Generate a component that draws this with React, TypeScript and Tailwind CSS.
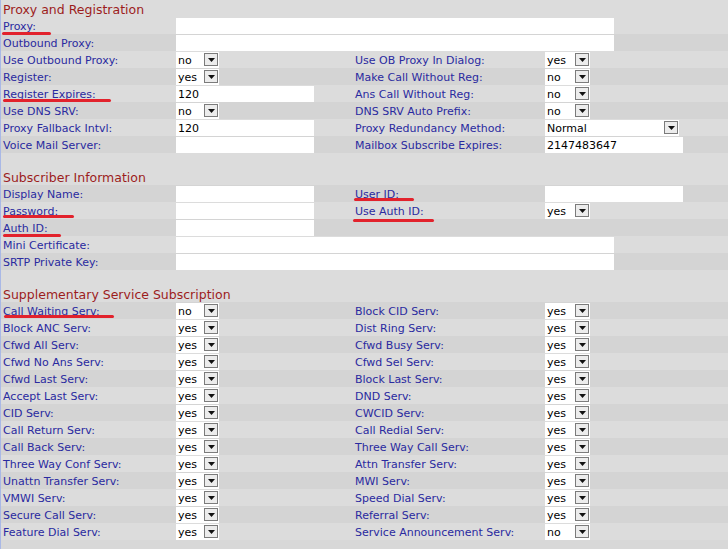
import React from 'react'

type Field =
  | { t: 'text'; v?: string; size: 'short' | 'long' }
  | { t: 'sel'; v: string; size: 'sm' | 'md' | 'lg' }

interface Side {
  label: string
  field: Field
  mark?: string
}

type Row =
  | { kind: 'head'; title: string; gap?: boolean }
  | { kind: 'pair'; l: Side; r?: Side }
  | { kind: 'wide'; l: Side }

const inputSize: Record<string, string> = {
  short: 'w-[138px]',
  long: 'w-[438px]',
}

const selectSize: Record<string, string> = {
  sm: 'w-[43px]',
  md: 'w-[45px]',
  lg: 'w-[134px]',
}

const yes = (size: 'sm' | 'md' = 'sm'): Field => ({ t: 'sel', v: 'yes', size })
const no = (size: 'sm' | 'md' = 'sm'): Field => ({ t: 'sel', v: 'no', size })
const txt = (v = ''): Field => ({ t: 'text', v, size: 'short' })
const long: Field = { t: 'text', v: '', size: 'long' }

const rows: Row[] = [
  { kind: 'head', title: 'Proxy and Registration' },
  { kind: 'wide', l: { label: 'Proxy:', field: long, mark: 'left-[1px] top-[15px] w-[49px]' } },
  { kind: 'wide', l: { label: 'Outbound Proxy:', field: long } },
  {
    kind: 'pair',
    l: { label: 'Use Outbound Proxy:', field: no() },
    r: { label: 'Use OB Proxy In Dialog:', field: yes('md') },
  },
  {
    kind: 'pair',
    l: { label: 'Register:', field: yes() },
    r: { label: 'Make Call Without Reg:', field: no('md') },
  },
  {
    kind: 'pair',
    l: { label: 'Register Expires:', field: txt('120'), mark: 'left-[2px] top-[14px] w-[108px]' },
    r: { label: 'Ans Call Without Reg:', field: no('md') },
  },
  {
    kind: 'pair',
    l: { label: 'Use DNS SRV:', field: no() },
    r: { label: 'DNS SRV Auto Prefix:', field: no('md') },
  },
  {
    kind: 'pair',
    l: { label: 'Proxy Fallback Intvl:', field: txt('120') },
    r: { label: 'Proxy Redundancy Method:', field: { t: 'sel', v: 'Normal', size: 'lg' } },
  },
  {
    kind: 'pair',
    l: { label: 'Voice Mail Server:', field: txt() },
    r: { label: 'Mailbox Subscribe Expires:', field: txt('2147483647') },
  },
  { kind: 'head', title: 'Subscriber Information', gap: true },
  {
    kind: 'pair',
    l: { label: 'Display Name:', field: txt() },
    r: { label: 'User ID:', field: txt(), mark: 'left-[1px] top-[13px] w-[60px]' },
  },
  {
    kind: 'pair',
    l: { label: 'Password:', field: txt(), mark: 'left-[2px] top-[13px] w-[71px]' },
    r: { label: 'Use Auth ID:', field: yes('md'), mark: 'left-[0px] top-[17px] w-[81px]' },
  },
  {
    kind: 'pair',
    l: { label: 'Auth ID:', field: txt(), mark: 'left-[2px] top-[15px] w-[58px]' },
  },
  { kind: 'wide', l: { label: 'Mini Certificate:', field: long } },
  { kind: 'wide', l: { label: 'SRTP Private Key:', field: long } },
  { kind: 'head', title: 'Supplementary Service Subscription', gap: true },
  {
    kind: 'pair',
    l: { label: 'Call Waiting Serv:', field: no(), mark: 'left-[3px] top-[13px] w-[110px]' },
    r: { label: 'Block CID Serv:', field: yes('md') },
  },
  { kind: 'pair', l: { label: 'Block ANC Serv:', field: yes() }, r: { label: 'Dist Ring Serv:', field: yes('md') } },
  { kind: 'pair', l: { label: 'Cfwd All Serv:', field: yes() }, r: { label: 'Cfwd Busy Serv:', field: yes('md') } },
  { kind: 'pair', l: { label: 'Cfwd No Ans Serv:', field: yes() }, r: { label: 'Cfwd Sel Serv:', field: yes('md') } },
  { kind: 'pair', l: { label: 'Cfwd Last Serv:', field: yes() }, r: { label: 'Block Last Serv:', field: yes('md') } },
  { kind: 'pair', l: { label: 'Accept Last Serv:', field: yes() }, r: { label: 'DND Serv:', field: yes('md') } },
  { kind: 'pair', l: { label: 'CID Serv:', field: yes() }, r: { label: 'CWCID Serv:', field: yes('md') } },
  { kind: 'pair', l: { label: 'Call Return Serv:', field: yes() }, r: { label: 'Call Redial Serv:', field: yes('md') } },
  { kind: 'pair', l: { label: 'Call Back Serv:', field: yes() }, r: { label: 'Three Way Call Serv:', field: yes('md') } },
  { kind: 'pair', l: { label: 'Three Way Conf Serv:', field: yes() }, r: { label: 'Attn Transfer Serv:', field: yes('md') } },
  { kind: 'pair', l: { label: 'Unattn Transfer Serv:', field: yes() }, r: { label: 'MWI Serv:', field: yes('md') } },
  { kind: 'pair', l: { label: 'VMWI Serv:', field: yes() }, r: { label: 'Speed Dial Serv:', field: yes('md') } },
  { kind: 'pair', l: { label: 'Secure Call Serv:', field: yes() }, r: { label: 'Referral Serv:', field: yes('md') } },
  { kind: 'pair', l: { label: 'Feature Dial Serv:', field: yes() }, r: { label: 'Service Announcement Serv:', field: no('md') } },
]

const Arrow = () => (
  <span className="flex h-[13px] w-[14px] items-center justify-center border border-[#7b7b7b] bg-[#ececec]">
    <svg width="7" height="4" viewBox="0 0 7 4">
      <path d="M0 0h7L3.5 4z" fill="#111" />
    </svg>
  </span>
)

const Control = ({ field }: { field: Field }) => {
  if (field.t === 'text') {
    return (
      <div className={`flex h-[16px] items-center bg-white pl-[2px] pt-[1px] text-black ${inputSize[field.size]}`}>
        {field.v}
      </div>
    )
  }
  return (
    <div className={`flex h-[16px] items-center justify-between bg-white pl-[2px] pr-[1px] text-black ${selectSize[field.size]}`}>
      <span className="pt-[1px]">{field.v}</span>
      <Arrow />
    </div>
  )
}

const Label = ({ side, className }: { side: Side; className: string }) => (
  <div className={`relative flex items-center pt-[1px] text-[#2a2aa0] ${className}`}>
    {side.label}
    {side.mark && (
      <span className={`absolute z-10 h-[3px] rounded-full bg-[#e2222c] ${side.mark}`} />
    )}
  </div>
)

export default function App() {
  return (
    <div className="h-[549px] w-[728px] overflow-hidden border-l border-[#a9b8e6] bg-[#d8d8d8] font-['DejaVu_Sans',Verdana,sans-serif] text-[11px] leading-none">
      {rows.map((row, i) => {
        const bg = i % 2 === 0 ? 'bg-[#d4d4d4]' : 'bg-[#dcdcdc]'
        if (row.kind === 'head') {
          return (
            <div key={i} className="bg-[#dcdcdc]">
              {row.gap && <div className="h-[15px]" />}
              <div className="flex h-[17px] items-end pb-[1px] pl-[2px] text-[12.5px] text-[#9c1c1c]">
                {row.title}
              </div>
            </div>
          )
        }
        return (
          <div key={i} className={`grid h-[17px] grid-cols-[175px_177px_192px_183px] ${bg}`}>
            <Label side={row.l} className="pl-[2px]" />
            {row.kind === 'wide' ? (
              <div className="col-span-3 flex items-center">
                <Control field={row.l.field} />
              </div>
            ) : (
              <>
                <div className="flex items-center">
                  <Control field={row.l.field} />
                </div>
                {row.r ? (
                  <>
                    <Label side={row.r} className="pl-[2px]" />
                    <div className="flex items-center">
                      <Control field={row.r.field} />
                    </div>
                  </>
                ) : (
                  <div className="col-span-2" />
                )}
              </>
            )}
          </div>
        )
      })}
    </div>
  )
}
